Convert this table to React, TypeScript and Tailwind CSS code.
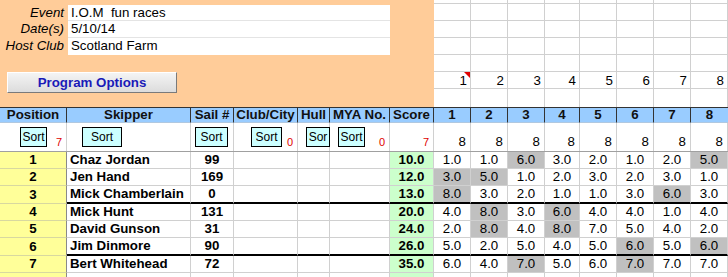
import React from 'react';

const font = "font-['Liberation_Sans',Arial,sans-serif]";
const mainCols =
  'grid grid-cols-[67px_124px_43px_64px_32px_60px_44px_37px_37px_37px_35px_37px_37px_37px_37px]';
const raceCols = 'grid grid-cols-[37px_37px_37px_35px_37px_37px_37px_37px]';

const info = [
  ['Event', 'I.O.M  fun races', 'h-[16px]'],
  ['Date(s)', '5/10/14', 'h-[17px]'],
  ['Host Club', 'Scotland Farm', 'h-[17px]'],
];

const rows = [
  { pos: 1, name: 'Chaz Jordan', sail: '99', score: '10.0', races: [1, 1, 6, 3, 2, 1, 2, 5], drop: [2, 7] },
  { pos: 2, name: 'Jen Hand', sail: '169', score: '12.0', races: [3, 5, 1, 2, 3, 2, 3, 1], drop: [0, 1] },
  { pos: 3, name: 'Mick Chamberlain', sail: '0', score: '13.0', races: [8, 3, 2, 1, 1, 3, 6, 3], drop: [0, 6], thick: true },
  { pos: 4, name: 'Mick Hunt', sail: '131', score: '20.0', races: [4, 8, 3, 6, 4, 4, 1, 4], drop: [1, 3] },
  { pos: 5, name: 'David Gunson', sail: '31', score: '24.0', races: [2, 8, 4, 8, 7, 5, 4, 2], drop: [1, 3] },
  { pos: 6, name: 'Jim Dinmore', sail: '90', score: '26.0', races: [5, 2, 5, 4, 5, 6, 5, 6], drop: [5, 7], thick: true },
  { pos: 7, name: 'Bert Whitehead', sail: '72', score: '35.0', races: [6, 4, 7, 5, 6, 7, 7, 7], drop: [2, 5] },
];

const headers = ['Position', 'Skipper', 'Sail #', 'Club/City', 'Hull', 'MYA No.', 'Score', '1', '2', '3', '4', '5', '6', '7', '8'];

const SortButton = ({ w, label = 'Sort' }: { w: string; label?: string }) => (
  <div className={`${w} h-[20px] shrink-0 border border-black bg-[#CCFFFF] text-[12px] flex items-center justify-center overflow-hidden`}>
    {label}
  </div>
);

const Red = ({ n }: { n: string }) => (
  <span className="ml-auto self-end pr-[4px] pb-[3px] text-[11px] leading-none text-[#e00000]">{n}</span>
);

export default function App() {
  return (
    <div className={`${font} w-[728px] h-[277px] overflow-hidden bg-white text-black text-[13.3px]`}>
      {/* top area */}
      <div className="flex h-[107px]">
        <div className="w-[434px] bg-[#FFCC99] pt-[5px]">
          {info.map(([label, value, h], i) => (
            <div key={label} className={`flex ${h}`}>
              <div className="w-[68px] pr-[4px] text-right italic leading-[16px]">{label}</div>
              <div className={`w-[322px] bg-white pl-[3px] leading-[16px] whitespace-pre ${i < 2 ? 'border-b border-[#e4e4e4]' : ''}`}>
                {value}
              </div>
            </div>
          ))}
          <div className="mt-[17px] ml-[7px] w-[170px] h-[21px] flex items-center justify-center bg-gradient-to-b from-[#f4f4f4] to-[#dcdcdc] border border-t-white border-l-white border-r-[#7a7a7a] border-b-[#7a7a7a] font-bold text-[#1a1ab8]">
            Program Options
          </div>
        </div>
        <div className={`flex-1 ${raceCols} grid-rows-[4px_17px_17px_17px_17px_17px_18px]`}>
          {Array.from({ length: 7 * 8 }).map((_, i) => {
            const r = Math.floor(i / 8);
            const c = i % 8;
            return (
              <div
                key={i}
                className={`relative border-r border-b border-[#d0d0d0] flex items-end justify-end pr-[3px] pb-[1px] leading-none ${r === 6 ? 'border-b-0' : ''}`}
              >
                {r === 5 && c + 1}
                {r === 5 && c === 0 && (
                  <span className="absolute top-0 right-0 w-0 h-0 border-l-[6px] border-l-transparent border-t-[6px] border-t-[#e00000]" />
                )}
              </div>
            );
          })}
        </div>
      </div>

      {/* header row */}
      <div className={`${mainCols} h-[16px] bg-[#99CCFF] border-t border-[#333]`}>
        {headers.map((h, i) => (
          <div
            key={h}
            className={`flex items-center justify-center font-bold text-[#111] leading-none whitespace-nowrap overflow-hidden border-b border-[#b0c8e0] ${i < headers.length - 1 ? 'border-r border-r-[#333]' : ''}`}
          >
            {h}
          </div>
        ))}
      </div>

      {/* sort row */}
      <div className={`${mainCols} h-[29px] border-b border-[#a0a0a0]`}>
        <div className="flex items-start pt-[4px] pl-[20px] border-r border-[#d0d0d0]">
          <SortButton w="w-[27px]" />
          <Red n="7" />
        </div>
        <div className="flex items-start pt-[4px] pl-[15px] border-r border-[#d0d0d0]">
          <SortButton w="w-[40px]" />
        </div>
        <div className="flex items-start pt-[4px] pl-[4px] border-r border-[#d0d0d0]">
          <SortButton w="w-[33px]" />
        </div>
        <div className="flex items-start pt-[4px] pl-[17px] border-r border-[#d0d0d0]">
          <SortButton w="w-[31px]" />
          <Red n="0" />
        </div>
        <div className="flex items-start pt-[4px] pl-[8px] border-r border-[#d0d0d0]">
          <SortButton w="w-[24px]" label="Sor" />
        </div>
        <div className="flex items-start pt-[4px] pl-[8px] border-r border-[#d0d0d0]">
          <SortButton w="w-[27px]" />
          <Red n="0" />
        </div>
        <div className="flex border-r border-[#d0d0d0]">
          <Red n="7" />
        </div>
        {Array.from({ length: 8 }).map((_, i) => (
          <div key={i} className="flex items-end justify-end pr-[4px] pb-[3px] leading-none border-r border-[#d0d0d0]">
            8
          </div>
        ))}
      </div>

      {/* results */}
      {rows.map((row) => {
        const line = row.thick ? 'border-b-2 border-b-black h-[18px]' : 'border-b border-b-[#d0d0d0] h-[17px]';
        return (
          <div key={row.pos} className={mainCols}>
            <div className={`bg-[#FFFF99] flex items-center justify-center font-bold border-r border-r-[#8a8a8a] border-b border-b-[#d8d8a0] ${row.thick ? 'h-[18px]' : 'h-[17px]'}`}>
              {row.pos}
            </div>
            <div className={`flex items-center pl-[3px] font-bold whitespace-nowrap border-r border-r-[#d0d0d0] ${line}`}>{row.name}</div>
            <div className={`flex items-center justify-center font-bold border-r border-r-[#d0d0d0] ${line}`}>{row.sail}</div>
            <div className={`border-r border-r-[#d0d0d0] ${line}`} />
            <div className={`border-r border-r-[#d0d0d0] ${line}`} />
            <div className={`border-r border-r-[#d0d0d0] ${line}`} />
            <div className={`bg-[#CCFFCC] flex items-center justify-center font-bold border-r border-r-[#d0d0d0] ${line}`}>{row.score}</div>
            {row.races.map((v, i) => (
              <div
                key={i}
                className={`flex items-center justify-center border-r border-r-[#d0d0d0] ${line} ${row.drop.includes(i) ? 'bg-[#C0C0C0]' : ''}`}
              >
                {v.toFixed(1)}
              </div>
            ))}
          </div>
        );
      })}

      {/* next empty row */}
      <div className={mainCols}>
        <div className="h-[17px] bg-[#FFFF99] border-r border-r-[#8a8a8a]" />
        <div className="h-[17px] border-r border-r-[#d0d0d0]" />
        <div className="h-[17px] border-r border-r-[#d0d0d0]" />
        <div className="h-[17px] border-r border-r-[#d0d0d0]" />
        <div className="h-[17px] border-r border-r-[#d0d0d0]" />
        <div className="h-[17px] border-r border-r-[#d0d0d0]" />
        <div className="h-[17px] bg-[#CCFFCC] border-r border-r-[#d0d0d0]" />
        {Array.from({ length: 8 }).map((_, i) => (
          <div key={i} className="h-[17px] border-r border-r-[#d0d0d0]" />
        ))}
      </div>
    </div>
  );
}
